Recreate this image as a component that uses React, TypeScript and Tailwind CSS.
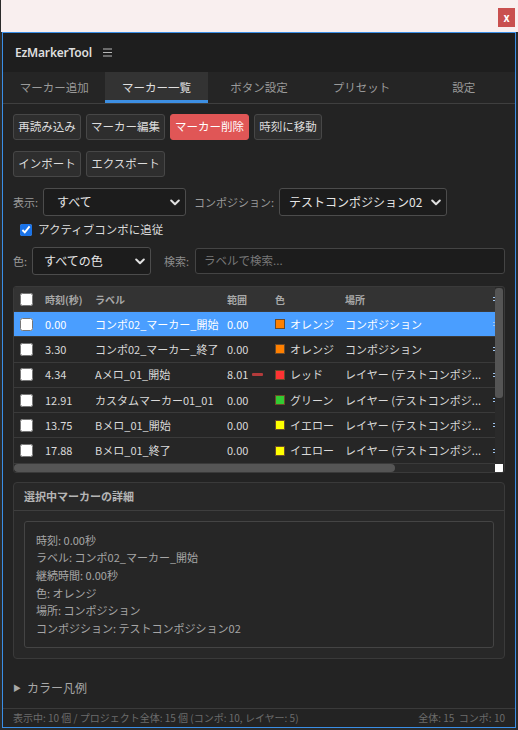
import { Fragment } from 'react'

type Row = {
  time: string
  label: string
  range: string
  bar?: boolean
  swatch: string
  colorName: string
  place: string
  selected?: boolean
}

const rows: Row[] = [
  { time: '0.00', label: 'コンポ02_マーカー_開始', range: '0.00', swatch: '#ff8000', colorName: 'オレンジ', place: 'コンポジション', selected: true },
  { time: '3.30', label: 'コンポ02_マーカー_終了', range: '0.00', swatch: '#ff8000', colorName: 'オレンジ', place: 'コンポジション' },
  { time: '4.34', label: 'Aメロ_01_開始', range: '8.01', bar: true, swatch: '#ff3333', colorName: 'レッド', place: 'レイヤー (テストコンポジ...' },
  { time: '12.91', label: 'カスタムマーカー01_01', range: '0.00', swatch: '#33cc33', colorName: 'グリーン', place: 'レイヤー (テストコンポジ...' },
  { time: '13.75', label: 'Bメロ_01_開始', range: '0.00', swatch: '#ffff00', colorName: 'イエロー', place: 'レイヤー (テストコンポジ...' },
  { time: '17.88', label: 'Bメロ_01_終了', range: '0.00', swatch: '#ffff00', colorName: 'イエロー', place: 'レイヤー (テストコンポジ...' },
]

const tabs = ['マーカー追加', 'マーカー一覧', 'ボタン設定', 'プリセット', '設定']

const details = [
  '時刻: 0.00秒',
  'ラベル: コンポ02_マーカー_開始',
  '継続時間: 0.00秒',
  '色: オレンジ',
  '場所: コンポジション',
  'コンポジション: テストコンポジション02',
]

function Chevron() {
  return (
    <svg width="10" height="7" viewBox="0 0 10 7" className="shrink-0">
      <polyline points="1.2,1.5 5,5.2 8.8,1.5" fill="none" stroke="#e0e0e0" strokeWidth="2" strokeLinecap="round" strokeLinejoin="round" />
    </svg>
  )
}

function Select({ value, width }: { value: string; width: string }) {
  return (
    <div className={`flex h-[28px] items-center justify-between rounded-[3px] border border-[#4c4c4c] bg-[#1c1c1c] pr-[5px] text-[12px] leading-none text-[#e6e6e6] ${width}`}>
      <span className="whitespace-nowrap">{value}</span>
      <Chevron />
    </div>
  )
}

function Btn({ children, width, danger }: { children: string; width: string; danger?: boolean }) {
  return (
    <div
      className={[
        'flex h-[26px] items-center justify-center rounded-[3px] border text-[11.5px] leading-none whitespace-nowrap',
        danger ? 'border-[#e05656] bg-[#e05656] text-white' : 'border-[#474747] bg-[#2e2e2e] text-[#dcdcdc]',
        width,
      ].join(' ')}
    >
      {children}
    </div>
  )
}

function Box() {
  return <input type="checkbox" readOnly className="m-0 h-[13px] w-[13px] accent-[#1a73e8]" />
}

// fragment of the column that is scrolled away behind the scrollbar
function CutMark() {
  return (
    <svg width="3" height="6" viewBox="0 0 3 6">
      <path d="M0 1.5h3M0 4.5h3" stroke="#9ec5f0" strokeWidth="1" />
    </svg>
  )
}

export default function App() {
  return (
    <div className="h-[730px] w-[518px] overflow-hidden bg-[#2b2b2b] font-['Noto_Sans_CJK_JP',sans-serif]">
      <div className="ml-[1px] flex h-[32px] items-start justify-end bg-[#f9efef] pr-[3px] pt-[8px]">
        <div className="flex h-[19px] w-[17px] items-center justify-center bg-[#c9504f] text-[11px] font-bold leading-none text-white">x</div>
      </div>

      <div className="mx-[2px] flex h-[696px] flex-col border border-[#3a8ee6] bg-[#232323]">
        <div className="flex h-[39px] items-center bg-[#1e1e1e] pl-[12px]">
          <span className="font-['Noto_Sans',sans-serif] text-[12px] font-semibold tracking-[-0.2px] text-[#dedede]">EzMarkerTool</span>
          <svg width="9" height="9" viewBox="0 0 9 9" className="ml-[11px]">
            <path d="M0 1h9M0 4.5h9M0 8h9" stroke="#b8b8b8" strokeWidth="1" />
          </svg>
        </div>

        <div className="flex h-[32px] border-b border-[#3f3f3f] bg-[#252525]">
          {tabs.map((t, i) => (
            <div
              key={t}
              className={[
                'flex flex-1 items-center justify-center text-[11.5px] leading-none',
                i === 1 ? 'border-b-[3px] border-[#3d8fe3] bg-[#333333] pt-[3px] text-[#e0e0e0]' : 'text-[#9a9a9a]',
              ].join(' ')}
            >
              {t}
            </div>
          ))}
        </div>

        <div className="flex flex-1 flex-col px-[10px]">
          <div className="mt-[10px] flex gap-[5px]">
            <Btn width="w-[68px]">再読み込み</Btn>
            <Btn width="w-[79px]">マーカー編集</Btn>
            <Btn width="w-[79px]" danger>マーカー削除</Btn>
            <Btn width="w-[68px]">時刻に移動</Btn>
          </div>
          <div className="mt-[11px] flex gap-[5px]">
            <Btn width="w-[68px]">インポート</Btn>
            <Btn width="w-[79px]">エクスポート</Btn>
          </div>

          <div className="mt-[11px] flex items-center">
            <span className="w-[30px] text-[11px] text-[#9a9a9a]">表示:</span>
            <Select value="すべて" width="w-[143px] pl-[13px]" />
            <span className="ml-[8px] w-[85px] whitespace-nowrap text-[11px] text-[#9a9a9a]">コンポジション:</span>
            <Select value="テストコンポジション02" width="w-[168px] pl-[9px]" />
          </div>

          <div className="mt-[6px] flex h-[16px] items-center pl-[7px]">
            <input type="checkbox" checked readOnly className="m-0 h-[12px] w-[12px] accent-[#1a73e8]" />
            <span className="ml-[6px] text-[11.5px] leading-none text-[#dcdcdc]">アクティブコンポに追従</span>
          </div>

          <div className="mt-[9px] flex items-center">
            <span className="w-[19px] text-[11px] text-[#9a9a9a]">色:</span>
            <Select value="すべての色" width="w-[119px] h-[27px] pl-[11px]" />
            <span className="ml-[13px] w-[31px] text-[11px] text-[#8c8c8c]">検索:</span>
            <div className="flex h-[26px] flex-1 items-center rounded-[3px] border border-[#444444] bg-[#1c1c1c] pl-[8px] text-[11.5px] text-[#777777]">ラベルで検索...</div>
          </div>

          <div className="mt-[11px] flex flex-col overflow-hidden rounded-[3px] border border-[#3a3a3a] bg-[#262626]">
            <div className="flex">
              <div className="w-[481px] overflow-hidden">
                <div className="flex h-[25px] w-[560px] items-center border-b border-[#3a3a3a] bg-[#333333] text-[10px] font-bold text-[#a8a8a8]">
                  <div className="flex w-[26px] pl-[6px]"><Box /></div>
                  <div className="w-[50px] pl-[5px]">時刻(秒)</div>
                  <div className="w-[132px] pl-[5px]">ラベル</div>
                  <div className="w-[48px] pl-[5px]">範囲</div>
                  <div className="w-[70px] pl-[5px]">色</div>
                  <div className="w-[148px] pl-[5px]">場所</div>
                  <div className="flex w-[60px] pl-[5px]"><CutMark /></div>
                </div>
                {rows.map((r) => (
                  <div
                    key={r.time}
                    className={[
                      'flex h-[25.3px] w-[560px] items-center border-b border-[#3a3a3a] text-[11px] whitespace-nowrap',
                      r.selected ? 'bg-[#4a9eff] text-white' : 'text-[#dadada]',
                    ].join(' ')}
                  >
                    <div className="flex w-[26px] pl-[6px]"><Box /></div>
                    <div className="w-[50px] pl-[5px]">{r.time}</div>
                    <div className="w-[132px] pl-[5px]">{r.label}</div>
                    <div className="flex w-[48px] items-center pl-[5px]">
                      <span>{r.range}</span>
                      {r.bar && <span className="ml-[4px] h-[3px] w-[11px] rounded-[1px] bg-[#b33b3b]" />}
                    </div>
                    <div className="flex w-[70px] items-center pl-[5px]">
                      <span className="h-[10px] w-[10px] shrink-0 border border-[#6a4a2a]" style={{ backgroundColor: r.swatch }} />
                      <span className="ml-[5px]">{r.colorName}</span>
                    </div>
                    <div className="w-[148px] pl-[5px]">{r.place}</div>
                    <div className="flex w-[60px] pl-[5px]"><CutMark /></div>
                  </div>
                ))}
              </div>
              <div className="w-[8px] bg-[#2a2a2a]">
                <div className="mt-[1px] h-[110px] w-[8px] rounded-[3px] bg-[#555555]" />
              </div>
            </div>
            <div className="flex h-[8px]">
              <div className="w-[481px] bg-[#2a2a2a]">
                <div className="h-[8px] w-[381px] rounded-[4px] bg-[#555555]" />
              </div>
              <div className="w-[8px] bg-white" />
            </div>
          </div>

          <div className="mt-[9px] rounded-[4px] border border-[#3a3a3a] bg-[#282828]">
            <div className="flex h-[28px] items-center border-b border-[#3e3e3e] pl-[10px] text-[11px] font-bold text-[#b5b5b5]">選択中マーカーの詳細</div>
            <div className="p-[10px]">
              <div className="rounded-[3px] border border-[#444444] bg-[#262626] px-[11px] py-[10px]">
                {details.map((d) => (
                  <Fragment key={d}>
                    <div className="text-[11px] leading-[17.6px] text-[#a6a6a6]">{d}</div>
                  </Fragment>
                ))}
              </div>
            </div>
          </div>

          <div className="mt-[21px] flex h-[16px] items-center text-[#a8a8a8]">
            <span className="text-[8px] leading-none">▶</span>
            <span className="ml-[6px] text-[12px] leading-none">カラー凡例</span>
          </div>
        </div>

        <div className="flex h-[19px] items-center justify-between border-t border-[#3a3a3a] px-[10px] text-[10px] leading-none whitespace-nowrap text-[#6c6c6c]">
          <span>表示中: 10 個 / プロジェクト全体: 15 個 (コンポ: 10, レイヤー: 5)</span>
          <span>全体: 15&nbsp;&nbsp;コンポ: 10</span>
        </div>
      </div>
    </div>
  )
}
